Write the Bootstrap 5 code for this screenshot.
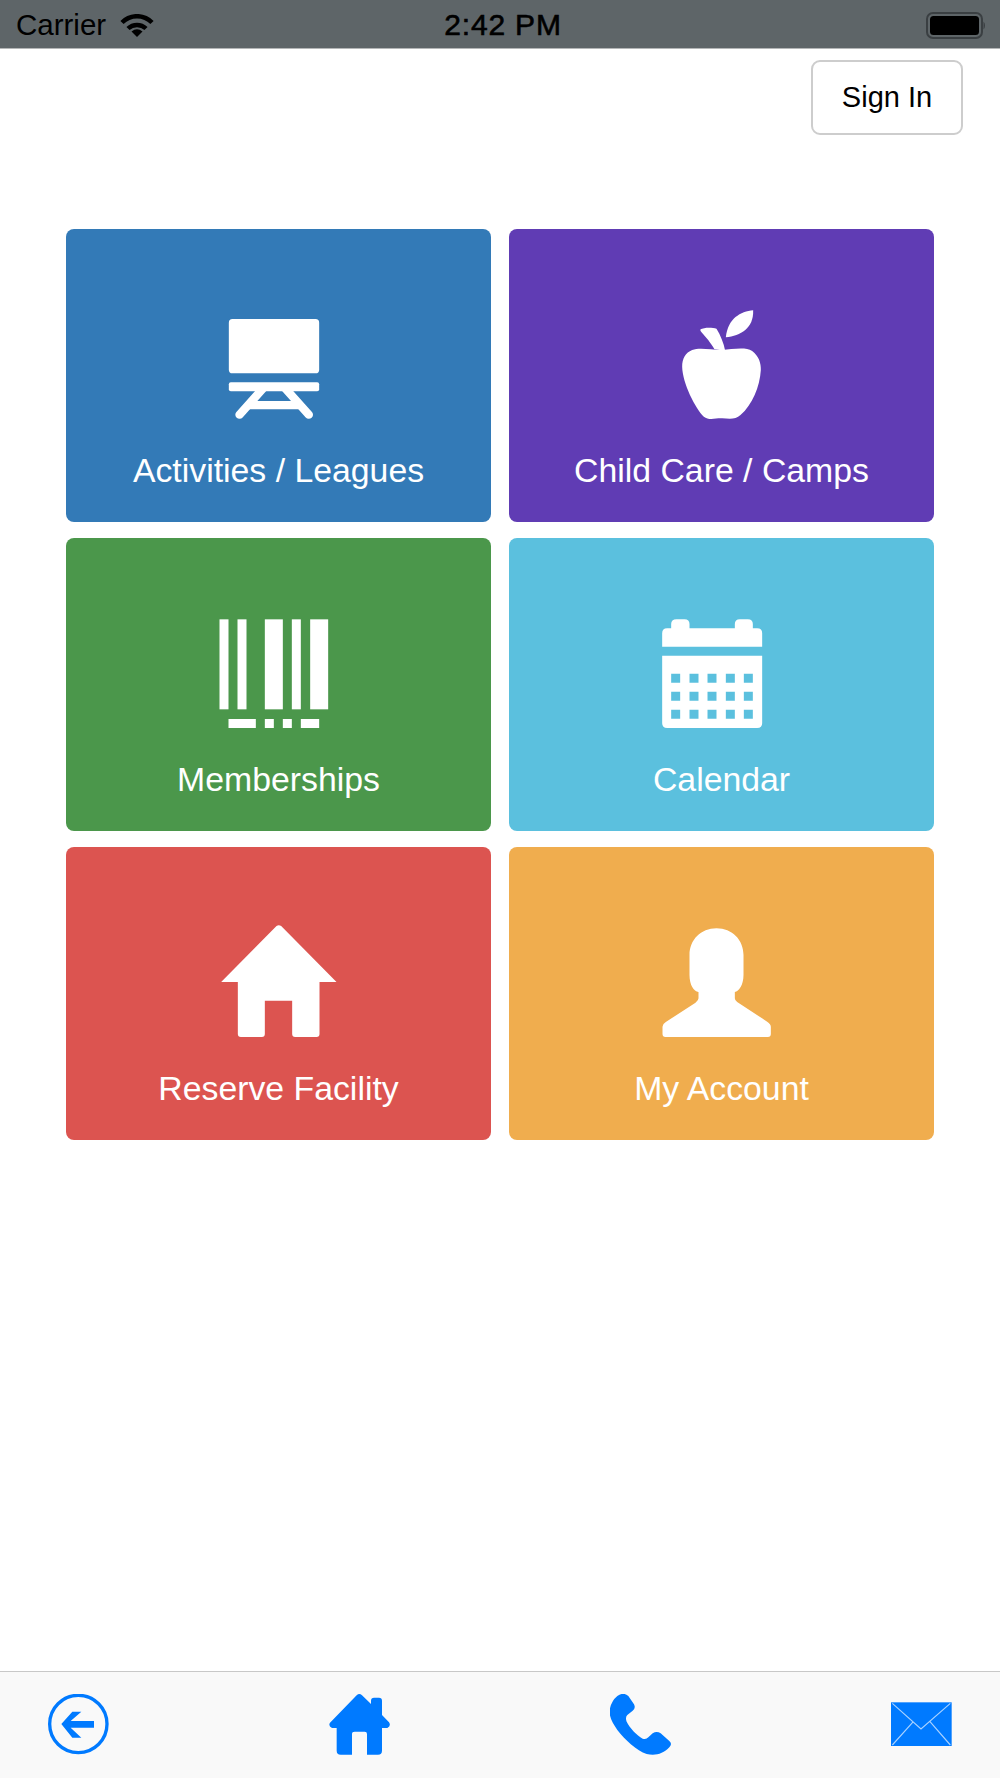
<!DOCTYPE html>
<html lang="en">
  <head>
    <meta charset="UTF-8" />
    <meta name="viewport" content="width=device-width, initial-scale=1.0" />
    <title>Home</title>
    <link
      rel="stylesheet"
      href="https://cdn.jsdelivr.net/npm/bootstrap@5.3.3/dist/css/bootstrap.min.css"
    />
    <style>
      body {
        font-family: "Liberation Sans", Arial, sans-serif;
        background: #fff;
      }
      .status-bar {
        height: 49px;
        padding: 2px 15px 0 16px;
        background: #5e6568;
        border-bottom: 1px solid #b4b6b7;
        color: #000;
        font-size: 29.5px;
        line-height: 46px;
      }
      .status-side {
        flex: 1 1 0;
      }
      .status-time {
        margin-left: 5px;
        font-size: 30px;
        letter-spacing: 0.8px;
        -webkit-text-stroke: 0.6px #000;
      }
      .wifi-icon {
        width: 34px;
        height: 23px;
        margin-left: 14px;
      }
      .battery-icon {
        width: 59px;
        height: 27px;
      }
      .top-actions {
        padding: 11px 37px 0 0;
      }
      .signin-btn {
        width: 152px;
        height: 75px;
        padding: 0;
        border: 2px solid #cdcdcd;
        border-radius: 9px;
        background: #fff;
        color: #000;
        font-size: 29px;
      }
      .tile-wrap {
        padding: 94px 66px 0;
      }
      .tile-grid {
        --bs-gutter-x: 18px;
        --bs-gutter-y: 16px;
      }
      .tile-link {
        height: 293px;
        padding-top: 75px;
        border-radius: 8px;
        color: #fff;
        font-size: 33.8px;
        line-height: 40px;
        text-decoration: none;
      }
      .tile-link svg {
        width: 120px;
        height: 120px;
        fill: #fff;
      }
      .tile-label {
        margin-top: 26px;
      }
      .tile-blue { background: #337ab7; }
      .tile-purple { background: #603cb4; }
      .tile-green { background: #4b974b; }
      .tile-sky { background: #5bc0de; }
      .tile-red { background: #dc5450; }
      .tile-orange { background: #f0ad4e; }
      .bottom-bar {
        height: 107px;
        padding: 22px 48px 0;
        background: #f9f9f9;
        border-top: 1px solid #c8c8c8;
      }
      .bottom-bar svg {
        width: 61px;
        height: 61px;
        fill: #007aff;
      }
    </style>
  </head>
  <body>
    <div class="d-flex flex-column vh-100">
      <div class="status-bar d-flex align-items-center">
        <div class="status-side d-flex align-items-center">
          <span>Carrier</span>
          <svg class="wifi-icon" viewBox="0 0 34 23">
            <path d="M2 8.5A21 21 0 0 1 32 8.5" fill="none" stroke="#000" stroke-width="4.5" />
            <path d="M8 14.5A13 13 0 0 1 26 14.5" fill="none" stroke="#000" stroke-width="4.5" />
            <path d="M17 23L11.5 17.5Q17 13 22.5 17.5Z" fill="#000" />
          </svg>
        </div>
        <div class="status-time">2:42 PM</div>
        <div class="status-side d-flex justify-content-end">
          <svg class="battery-icon" viewBox="0 0 59 27">
            <rect x="1" y="1" width="55" height="25" rx="6" fill="none" stroke="#3a3f42" stroke-width="2" />
            <rect x="4" y="4" width="49" height="19" rx="3.5" fill="#000" />
            <path d="M57.5 9.5Q59 11 59 13.500Q59 16 57.500 17.500Z" fill="#3a3f42" />
          </svg>
        </div>
      </div>

      <div class="top-actions d-flex justify-content-end">
        <button type="button" class="btn signin-btn">Sign In</button>
      </div>

      <main class="tile-wrap flex-grow-1">
        <div class="row row-cols-2 tile-grid">
          <div class="col">
            <a href="#" class="tile-link tile-blue d-flex flex-column align-items-center">
              <svg viewBox="85.500 42 360 360">
                <rect x="115" y="87" width="271" height="163" rx="11" />
                <rect x="115" y="277" width="271" height="27" rx="6" />
                <path d="M218 295L147 374M284 295L355 374" fill="none" stroke="#fff" stroke-width="25" stroke-linecap="round" />
                <path d="M180 333H320L342 358H160Z" />
              </svg>
              <span class="tile-label">Activities / Leagues</span>
            </a>
          </div>
          <div class="col">
            <a href="#" class="tile-link tile-purple d-flex flex-column align-items-center">
              <svg viewBox="64.500 42 360 360">
                <path d="M245 180C275 178 315 170 335 183C355 198 362 220 361 240C358 290 335 345 300 375C285 390 265 386 245 385C225 384 205 392 190 380C165 355 126 280 125 230C125 205 135 188 155 180C175 172 205 178 245 180Z" />
                <path d="M180 118C190 112 215 112 228 116C240 135 250 160 254 182L222 178C212 160 195 140 183 127Q178 122 180 118Z" />
                <path d="M338 61C300 65 262 85 256 142C300 138 340 115 338 61Z" />
              </svg>
              <span class="tile-label">Child Care / Camps</span>
            </a>
          </div>
          <div class="col">
            <a href="#" class="tile-link tile-green d-flex flex-column align-items-center">
              <svg viewBox="85.500 39 360 360">
                <rect x="87" y="58" width="27" height="270" />
                <rect x="141" y="58" width="27" height="270" />
                <rect x="223" y="58" width="54" height="270" />
                <rect x="304" y="58" width="27" height="270" />
                <rect x="359" y="58" width="54" height="270" />
                <rect x="114" y="357" width="82" height="27" />
                <rect x="223" y="357" width="27" height="27" />
                <rect x="277" y="357" width="27" height="27" />
                <rect x="331" y="357" width="55" height="27" />
              </svg>
              <span class="tile-label">Memberships</span>
            </a>
          </div>
          <div class="col">
            <a href="#" class="tile-link tile-sky d-flex flex-column align-items-center">
              <svg viewBox="64.500 39 360 360">
                <path d="M65 140V100Q65 85 80 85H92V72Q92 58 108 58H132Q147 58 147 72V85H283V72Q283 58 298 58H322Q337 58 337 72V85H350Q365 85 365 100V140Z" />
                <path fill-rule="evenodd" d="M65 167H365V370Q365 384 350 384H80Q65 384 65 370Z
                  M92 221h27v27h-27Z M147 221h27v27h-27Z M201 221h27v27h-27Z M256 221h27v27h-27Z M310 221h27v27h-27Z
                  M92 275h27v27h-27Z M147 275h27v27h-27Z M201 275h27v27h-27Z M256 275h27v27h-27Z M310 275h27v27h-27Z
                  M92 329h27v27h-27Z M147 329h27v27h-27Z M201 329h27v27h-27Z M256 329h27v27h-27Z M310 329h27v27h-27Z" />
              </svg>
              <span class="tile-label">Calendar</span>
            </a>
          </div>
          <div class="col">
            <a href="#" class="tile-link tile-red d-flex flex-column align-items-center">
              <svg viewBox="85.500 36 360 360">
                <path d="M258 48Q265 43 272 48L438 216H387V372Q387 381 378 381H314Q305 381 305 372V272H223V372Q223 381 214 381H151Q142 381 142 372V216H92Z" />
              </svg>
              <span class="tile-label">Reserve Facility</span>
            </a>
          </div>
          <div class="col">
            <a href="#" class="tile-link tile-orange d-flex flex-column align-items-center">
              <svg viewBox="64.500 36 360 360">
                <path d="M228 55C275 55 309 90 309 135V195C309 225 295 245 283 246V265Q283 272 290 276L380 335Q391 342 391 350V372Q391 381 382 381H75Q66 381 66 372V350Q66 342 76 336L165 278Q174 272 174 265V246C160 245 147 225 147 195V135C147 90 181 55 228 55Z" />
              </svg>
              <span class="tile-label">My Account</span>
            </a>
          </div>
        </div>
      </main>

      <nav class="bottom-bar d-flex justify-content-between align-items-start">
        <a href="#" aria-label="Back">
          <svg viewBox="145 102 183 183">
            <circle cx="236" cy="192" r="86" fill="none" stroke="#007aff" stroke-width="10" />
            <path d="M283 183H213L245 155H218L185 192L218 233H245L213 203H283Z" />
          </svg>
        </a>
        <a href="#" aria-label="Home">
          <svg viewBox="987 102 183 183">
            <path d="M1070 106Q1078 98 1086 106L1113 132V122Q1113 113 1122 113H1137Q1146 113 1146 122V165L1167 187Q1174 198 1162 204H1146V272Q1146 284 1134 284H1101V222Q1101 215 1094 215H1064Q1056 215 1056 222V284H1022Q1010 284 1010 272V204H996Q984 198 990 188Z" />
          </svg>
        </a>
        <a href="#" aria-label="Call">
          <svg viewBox="330 102 183 183">
            <path d="M352 108Q370 95 385 108L402 133Q408 145 398 152L382 165Q375 172 380 185C390 205 410 225 428 236Q438 240 445 232L458 220Q470 212 482 220L508 243Q518 252 508 262C490 282 465 288 440 282C410 272 375 240 352 210C335 185 325 165 330 145Q335 122 352 108Z" />
          </svg>
        </a>
        <a href="#" aria-label="Email">
          <svg viewBox="1173 102 183 183">
            <rect x="1173" y="127" width="182" height="131" />
            <path d="M1177 130L1263 207L1351 130M1240 185L1177 255M1290 185L1351 255" fill="none" stroke="#a9d2ff" stroke-width="3.500" />
          </svg>
        </a>
      </nav>
    </div>

    <script src="https://cdn.jsdelivr.net/npm/bootstrap@5.3.3/dist/js/bootstrap.bundle.min.js"></script>
  </body>
</html>
